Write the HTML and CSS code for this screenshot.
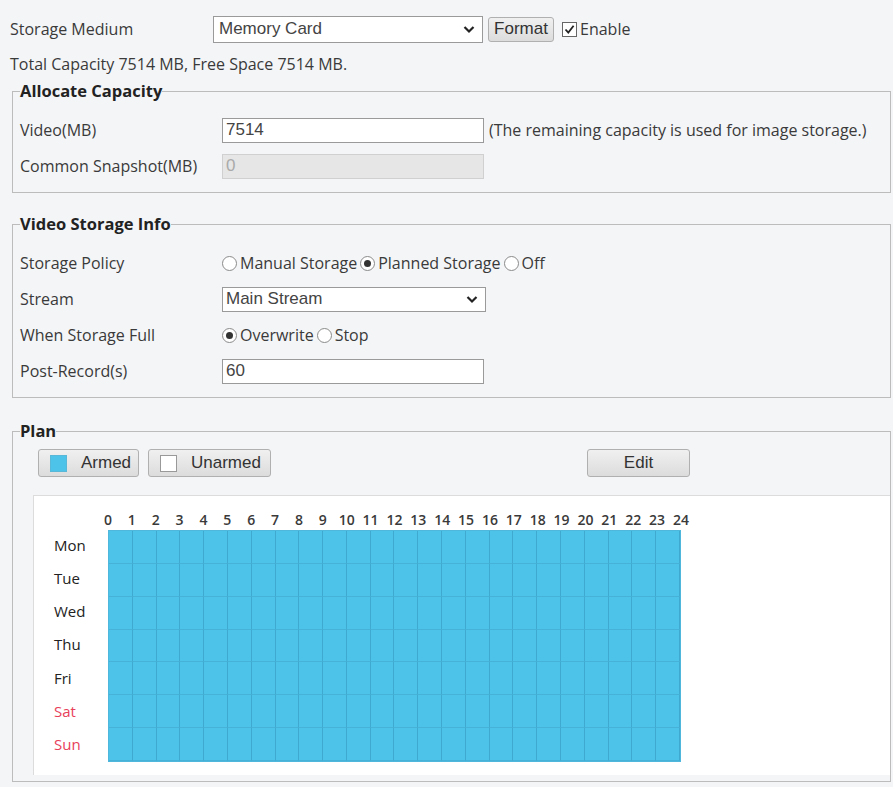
FILE: index.html
```html
<!DOCTYPE html>
<html lang="en">
<head>
  <meta charset="UTF-8" />
  <title>Storage</title>
  <link rel="stylesheet" href="styles.css">
</head>
<body>
  <div class="page">
    <div class="row top-row">
      <span class="label top-label">Storage Medium</span>
      <div class="select medium">
        <span>Memory Card</span>
        <svg class="chev" width="14" height="10" viewBox="0 0 14 10"><path d="M2.5 3 L7 7.5 L11.5 3" fill="none" stroke="#222" stroke-width="2.2"/></svg>
      </div>
      <button class="btn format">Format</button>
      <span class="check"><svg width="13" height="13" viewBox="0 0 13 13"><path d="M2.5 6.5 L5.3 9.6 L10.6 2.8" fill="none" stroke="#222" stroke-width="1.8"/></svg></span>
      <span class="opt">Enable</span>
    </div>
    <p class="capacity">Total Capacity 7514 MB, Free Space 7514 MB.</p>

    <fieldset class="group alloc">
      <legend>Allocate Capacity</legend>
      <div class="row">
        <span class="label">Video(MB)</span>
        <div class="text-input">7514</div>
        <span class="note">(The remaining capacity is used for image storage.)</span>
      </div>
      <div class="row">
        <span class="label">Common Snapshot(MB)</span>
        <div class="text-input disabled">0</div>
      </div>
    </fieldset>

    <fieldset class="group info">
      <legend>Video Storage Info</legend>
      <div class="row">
        <span class="label">Storage Policy</span>
        <span class="radio"></span><span class="opt">Manual Storage</span>
        <span class="radio on"></span><span class="opt">Planned Storage</span>
        <span class="radio"></span><span class="opt">Off</span>
      </div>
      <div class="row">
        <span class="label">Stream</span>
        <div class="select stream">
          <span>Main Stream</span>
          <svg class="chev" width="14" height="10" viewBox="0 0 14 10"><path d="M2.5 3 L7 7.5 L11.5 3" fill="none" stroke="#222" stroke-width="2.2"/></svg>
        </div>
      </div>
      <div class="row">
        <span class="label">When Storage Full</span>
        <span class="radio on"></span><span class="opt">Overwrite</span>
        <span class="radio"></span><span class="opt">Stop</span>
      </div>
      <div class="row">
        <span class="label">Post-Record(s)</span>
        <div class="text-input">60</div>
      </div>
    </fieldset>

    <fieldset class="group plan">
      <legend>Plan</legend>
      <div class="plan-bar">
        <button class="btn mode armed"><span class="swatch blue"></span>Armed</button>
        <button class="btn mode unarmed"><span class="swatch white"></span>Unarmed</button>
        <button class="btn edit">Edit</button>
      </div>
      <div class="panel">
        <div class="hours" id="hours"></div>
        <div class="week">
          <div class="days">
            <span>Mon</span><span>Tue</span><span>Wed</span><span>Thu</span><span>Fri</span>
            <span class="weekend">Sat</span><span class="weekend">Sun</span>
          </div>
          <div class="grid" id="grid"></div>
        </div>
      </div>
    </fieldset>
  </div>

  <script>
    const hours = document.getElementById('hours');
    for (let h = 0; h <= 24; h++) {
      const s = document.createElement('span');
      s.textContent = h;
      hours.appendChild(s);
    }
    const grid = document.getElementById('grid');
    for (let i = 0; i < 7 * 24; i++) {
      grid.appendChild(document.createElement('div'));
    }
  </script>
</body>
</html>
```

FILE: styles.css
```css
body {
  margin: 0;
  background: #f4f5f7;
  font-family: "Open Sans", "Noto Sans", sans-serif;
  font-size: 16px;
  color: #3a3a3a;
}
.page {
  padding: 11px 2px 0 10px;
}
.row {
  display: flex;
  align-items: center;
  height: 36px;
  white-space: nowrap;
}
.label {
  width: 202px;
  flex: none;
}
.top-label {
  width: 203px;
}
.select, .text-input {
  box-sizing: border-box;
  height: 25px;
  border: 1px solid #9a9a9a;
  background: #fff;
  font-family: "Liberation Sans", Arial, sans-serif;
  font-size: 17px;
  color: #444;
  display: flex;
  align-items: center;
  padding-left: 3px;
}
.select {
  justify-content: space-between;
  padding-right: 6px;
}
.select.medium {
  width: 270px;
  height: 27px;
  padding-left: 5px;
}
.select.stream {
  width: 264px;
}
.text-input {
  width: 262px;
}
.text-input.disabled {
  background: #e6e6e6;
  border-color: #d0d0d0;
  color: #aaa;
}
.note {
  margin-left: 5px;
}
.btn {
  font-family: "Liberation Sans", Arial, sans-serif;
  font-size: 17px;
  color: #333;
  background: linear-gradient(#f0f0f0, #dcdcdc);
  border: 1px solid #b0b0b0;
  border-radius: 3px;
  padding: 0;
  box-sizing: border-box;
}
.format {
  width: 66px;
  height: 25px;
  margin-left: 5px;
}
.check {
  width: 13px;
  height: 13px;
  border: 1px solid #666;
  background: #fff;
  margin-left: 8px;
  display: flex;
}
.opt {
  margin-left: 3px;
  margin-right: 3px;
}
.radio {
  box-sizing: border-box;
  width: 15px;
  height: 15px;
  border: 1px solid #8a8a8a;
  border-radius: 50%;
  background: #fff;
  display: flex;
  align-items: center;
  justify-content: center;
}
.radio.on::after {
  content: "";
  width: 7px;
  height: 7px;
  border-radius: 50%;
  background: #333;
}
.capacity {
  margin: 0;
  box-sizing: border-box;
  height: 34px;
  padding-top: 7px;
  line-height: 20px;
}
.group {
  margin: 0 0 0 2px;
  border: 1px solid #bcbcbc;
  padding: 11px 0 8px 7px;
}
.group legend {
  font-weight: bold;
  font-size: 16.5px;
  color: #222;
  padding: 0;
  line-height: 20px;
}
.info {
  margin-top: 21px;
}
.plan {
  margin-top: 23px;
  padding: 8px 0 6px 7px;
}
.plan-bar {
  display: flex;
  align-items: center;
  height: 28px;
  padding-left: 18px;
}
.mode {
  height: 28px;
  display: flex;
  align-items: center;
  gap: 14px;
  padding-left: 11px;
}
.armed {
  width: 101px;
}
.unarmed {
  width: 123px;
  margin-left: 9px;
}
.swatch {
  width: 17px;
  height: 17px;
  box-sizing: border-box;
}
.swatch.blue {
  background: #4ec3ea;
  border: 1px solid #59b7d8;
}
.swatch.white {
  background: #fff;
  border: 1px solid #999;
}
.edit {
  width: 103px;
  height: 28px;
  margin-left: 316px;
}
.panel {
  margin: 18px 0 0 13px;
  height: 280px;
  background: #fff;
  border-top: 1px solid #dcdcdc;
  border-left: 1px solid #dcdcdc;
  box-sizing: border-box;
  padding-top: 14px;
}
.hours {
  display: flex;
  padding-left: 62px;
  height: 20px;
  font-size: 14px;
  font-weight: 600;
  color: #3a3a3a;
}
.hours span {
  width: 23.875px;
  text-align: center;
}
.week {
  display: flex;
}
.days {
  width: 74px;
  display: flex;
  flex-direction: column;
  padding-left: 20px;
  box-sizing: border-box;
  font-size: 15px;
}
.days span {
  height: 33.14px;
  line-height: 31px;
  color: #222;
}
.days .weekend {
  color: #e8405a;
}
.grid {
  width: 573px;
  height: 232px;
  display: grid;
  grid-template-columns: repeat(24, 1fr);
  grid-template-rows: repeat(7, 1fr);
  background: #4ec3ea;
  border: 1px solid #4fb6dc;
  box-sizing: border-box;
}
.grid div {
  border-right: 1px solid #3fa9cf;
  border-bottom: 1px solid #46b2d8;
}
```
